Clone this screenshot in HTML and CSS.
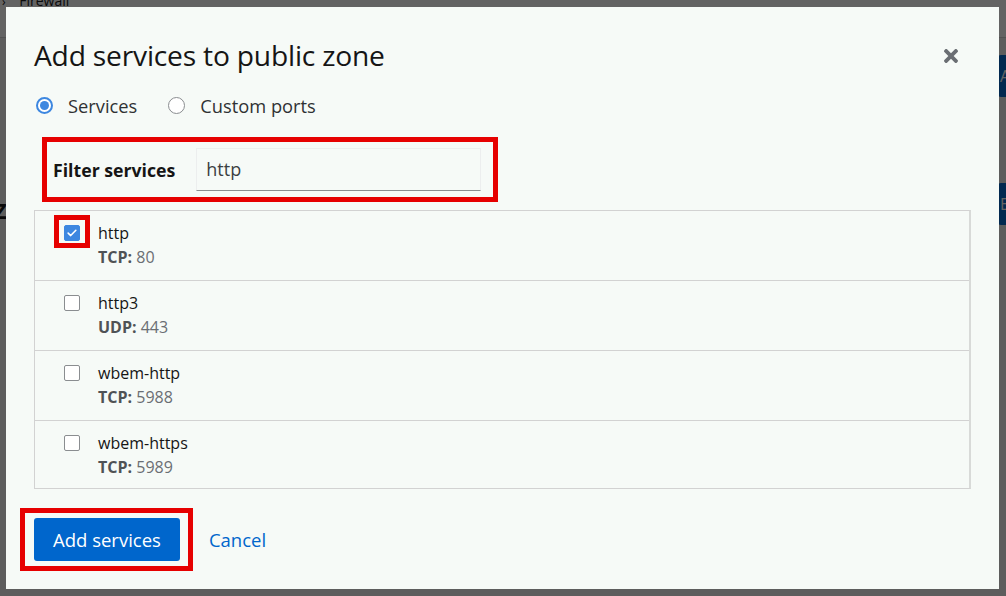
FILE: index.html
```html
<!DOCTYPE html>
<html lang="en">
<head>
<meta charset="utf-8">
<title>Add services to public zone</title>
<link rel="stylesheet" href="styles.css">
</head>
<body>
<div class="page">
  <div class="topbar"><div class="crumb"><span class="crumb-caret">›</span> Firewall</div></div>
  <div class="page-main">
    <div class="page-row">
      <span class="bg-frag"></span>
      <span class="bg-btn">Add</span>
    </div>
    <div class="page-row second">
      <span class="bg-heading">Z</span>
      <span class="bg-btn">Edit</span>
    </div>
  </div>
</div>
<div class="backdrop"></div>

<div class="modal" role="dialog" aria-labelledby="modal-title">
  <header class="modal-header">
    <h1 id="modal-title" class="modal-title">Add services to public zone</h1>
    <button class="close-btn" aria-label="Close">
      <svg viewBox="0 80 352 352" width="14" height="14" aria-hidden="true"><path fill="currentColor" d="M242.72 256l100.07-100.07c12.28-12.28 12.28-32.19 0-44.48l-22.24-22.24c-12.28-12.28-32.19-12.28-44.48 0L176 189.28 75.93 89.21c-12.28-12.28-32.19-12.28-44.48 0L9.21 111.45c-12.28 12.28-12.28 32.19 0 44.48L109.28 256 9.21 356.07c-12.28 12.28-12.28 32.19 0 44.48l22.24 22.24c12.28 12.28 32.2 12.28 44.48 0L176 322.72l100.07 100.07c12.28 12.28 32.2 12.28 44.48 0l22.24-22.24c12.28-12.28 12.28-32.19 0-44.48L242.72 256z"/></svg>
    </button>
  </header>

  <div class="radio-row">
    <label class="radio"><span class="radio-input checked"></span>Services</label>
    <label class="radio"><span class="radio-input"></span>Custom ports</label>
  </div>

  <div class="filter-row">
    <label class="filter-label" for="filter">Filter services</label>
    <div class="filter-input" id="filter">http</div>
  </div>

  <ul class="service-list">
    <li class="service">
      <span class="checkbox checked">
        <svg viewBox="0 0 12 10" width="10" height="8" aria-hidden="true"><path d="M1.2 5.2 L4.4 8.2 L10.8 1.6" fill="none" stroke="#fff" stroke-width="2" stroke-linecap="round" stroke-linejoin="round"/></svg>
      </span>
      <div class="service-text">
        <div class="service-name">http</div>
        <div class="service-ports"><b>TCP:</b> 80</div>
      </div>
    </li>
    <li class="service">
      <span class="checkbox"></span>
      <div class="service-text">
        <div class="service-name">http3</div>
        <div class="service-ports"><b>UDP:</b> 443</div>
      </div>
    </li>
    <li class="service">
      <span class="checkbox"></span>
      <div class="service-text">
        <div class="service-name">wbem-http</div>
        <div class="service-ports"><b>TCP:</b> 5988</div>
      </div>
    </li>
    <li class="service">
      <span class="checkbox"></span>
      <div class="service-text">
        <div class="service-name">wbem-https</div>
        <div class="service-ports"><b>TCP:</b> 5989</div>
      </div>
    </li>
  </ul>

  <footer class="modal-footer">
    <button class="btn-primary">Add services</button>
    <button class="btn-link">Cancel</button>
  </footer>

  <div class="mark mark-filter"></div>
  <div class="mark mark-check"></div>
  <div class="mark mark-button"></div>
</div>
</body>
</html>
```

FILE: styles.css
```css
* { box-sizing: border-box; }

html, body {
  margin: 0;
  padding: 0;
  width: 1006px;
  height: 596px;
  overflow: hidden;
}

body {
  font-family: "Open Sans", "Liberation Sans", sans-serif;
  color: #151515;
  background: #f0f0f0;
  position: relative;
}

/* background page (under the backdrop) */
.page {
  height: 596px;
}
.topbar {
  height: 38px;
  background: #fff;
  border-bottom: 1px solid #d2d2d2;
  padding-left: 2px;
  overflow: hidden;
}
.crumb {
  margin-top: -6px;
  font-size: 14px;
  line-height: 14px;
  color: #151515;
}
.crumb-caret { font-size: 12px; margin-right: 10px; }
.page-main { padding: 17px 0 0 0; }
.page-row {
  display: flex;
  justify-content: space-between;
  align-items: center;
  height: 42px;
}
.page-row.second { margin-top: 86px; }
.bg-heading { font-size: 22px; font-weight: 700; margin-left: -6px; margin-top: 12px; }
.bg-btn {
  background: #0066cc;
  color: #fff;
  width: 60px;
  height: 42px;
  border-radius: 3px;
  margin-right: -52px;
  font-size: 16px;
  line-height: 42px;
  padding-left: 2px;
}

.backdrop {
  position: absolute;
  inset: 0;
  background: rgba(3, 3, 3, 0.62);
}

/* modal */
.modal {
  position: absolute;
  left: 6px;
  top: 7px;
  width: 993px;
  height: 582px;
  background: #f6faf7;
  padding: 28px;
  display: flex;
  flex-direction: column;
}

.modal-header {
  display: flex;
  align-items: center;
  justify-content: space-between;
  height: 40px;
}
.modal-title {
  margin: 0;
  font-size: 28.2px;
  font-weight: 500;
  line-height: 40px;
  letter-spacing: -0.2px;
}
.close-btn {
  border: 0;
  background: none;
  padding: 0;
  margin-right: 13px;
  margin-top: 2px;
  color: #6a6e73;
  width: 14px;
  height: 14px;
  display: flex;
}

.radio-row {
  display: flex;
  gap: 29px;
  margin-top: 18px;
  height: 24px;
  align-items: center;
}
.radio {
  display: flex;
  align-items: center;
  gap: 15px;
  font-size: 18.3px;
  color: #2f3133;
  padding-left: 2px;
}
.radio-input {
  width: 17px;
  height: 17px;
  border-radius: 50%;
  border: 1.5px solid #8a8d90;
  background: #fff;
  display: inline-block;
  position: relative;
}
.radio-input.checked {
  border: 2px solid #3d87e0;
}
.radio-input.checked::after {
  content: "";
  position: absolute;
  left: 2px;
  top: 2px;
  width: 9px;
  height: 9px;
  border-radius: 50%;
  background: #3d87e0;
}

.filter-row {
  display: flex;
  align-items: center;
  gap: 21px;
  margin-top: 31px;
  padding-left: 19px;
  height: 43px;
}
.filter-label {
  font-weight: 700;
  font-size: 17.7px;
  color: #151515;
}
.filter-input {
  width: 285px;
  height: 43px;
  background: #f6faf7;
  border: 1px solid #eceeee;
  border-bottom: 1px solid #8a8d90;
  padding-left: 9px;
  font-size: 18px;
  line-height: 41px;
  color: #3c3f42;
}

.service-list {
  list-style: none;
  margin: 19px 0 0 0;
  padding: 0;
  border: 1px solid #d2d2d2;
  border-right: 2px solid #d8dad8;
}
.service {
  display: flex;
  align-items: flex-start;
  padding: 10px 0 11px 29px;
  border-top: 1px solid #d2d2d2;
}
.service:first-child { border-top: 0; }
.service:last-child { padding-bottom: 9px; }

.checkbox {
  width: 16px;
  height: 16px;
  border: 1.5px solid #8a8d90;
  border-radius: 2px;
  background: #fff;
  margin-top: 4px;
  flex: none;
  display: flex;
  align-items: center;
  justify-content: center;
}
.checkbox.checked {
  background: #3d87e0;
  border-color: #3d87e0;
}
.service-text {
  margin-left: 18px;
  font-size: 16px;
  line-height: 24px;
}
.service-name { color: #151515; }
.service-ports { color: #6a6e73; }
.service-ports b { color: #4f5255; font-weight: 700; }

.modal-footer {
  display: flex;
  align-items: center;
  gap: 29px;
  margin-top: 29px;
}
.btn-primary {
  background: #0066cc;
  color: #fff;
  border: 0;
  border-radius: 3px;
  height: 43px;
  padding: 0 19px;
  font-family: inherit;
  font-size: 18.5px;
}
.btn-link {
  background: none;
  border: 0;
  padding: 0;
  color: #0066cc;
  font-family: inherit;
  font-size: 18.5px;
}

/* annotation marks */
.mark {
  position: absolute;
  border: 5px solid #e60000;
  pointer-events: none;
}
.mark-filter { left: 36px; top: 130px; width: 456px; height: 65px; }
.mark-check { left: 48px; top: 208px; width: 36px; height: 33px; }
.mark-button { left: 14px; top: 501px; width: 173px; height: 63px; }
```
